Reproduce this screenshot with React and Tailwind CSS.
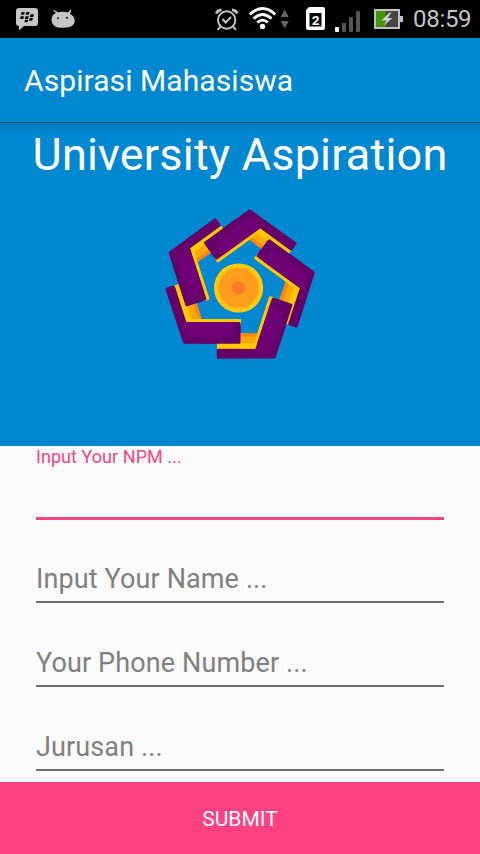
import React from "react";

const ARMS = [
  "rotate(0 238.4 287.1)",
  "translate(0 1.500) rotate(-72 238.4 287.1)",
  "translate(-1.200 -1.400) rotate(-144 238.4 287.1)",
  "rotate(-216 238.4 287.1)",
  "translate(0.800 0) rotate(-288 238.4 287.1)",
];

function Logo() {
  return (
    <svg width="156" height="156" viewBox="162 206 156 156" aria-hidden="true">
      {ARMS.map((t) => (
        <g key={t} transform={t}>
          <path d="M179 286L190.500 282L202.500 321H190Z" fill="#ff8410" />
          <path d="M178 286L187 283L199 321H190Z" fill="#ffa60a" />
          <path d="M173 286L180 283.500L191.500 319H241V324H186Z" fill="#ffc800" />
          <path d="M167 289.200L173.500 287L185.200 323.500H239V342.200H184.500Z" fill="#640068" stroke="#640068" strokeWidth="3" strokeLinejoin="round" />
        </g>
      ))}
      {ARMS.map((t) => (
        <g key={t} transform={t}>
          <path d="M200 319H238.500Q240.500 319 240.500 322V326H200Z" fill="#ffc800" />
          <path d="M200 323.500H239V342.200H200Z" fill="#640068" stroke="#640068" strokeWidth="3" strokeLinejoin="round" />
          <path d="M185.500 322H232V334Q232 337 229 337H188L184 322Z" fill="#700076" />
        </g>
      ))}
      <circle cx="238.600" cy="288" r="24.600" fill="#ffc80a" />
      <circle cx="238.600" cy="288" r="20" fill="#ff9c1c" />
      <circle cx="238.600" cy="288" r="6.800" fill="#ff7b27" />
    </svg>
  );
}

function StatusIcons() {
  return (
    <svg width="404" height="38" viewBox="0 0 404 38" aria-hidden="true">
      <path d="M19 8H35Q38 8 38 11V23Q38 26 35 26H24L19 30.500V26Q16 26 16 23V11Q16 8 19 8Z" fill="#c6c6c6" />
      <g fill="#080808">
        <path d="M21.500 12h3.300l-.7 2.800h-3.300zM26.300 12h3.300l-.7 2.800h-3.300zM20.700 16.200H24l-.7 2.800H20zM25.500 16.200h3.300l-.7 2.800h-3.300zM30.600 14.200h3.300l-.7 2.800h-3.300zM29.700 18h3.300l-.7 2.700H29zM25 19.700h3.300l-.7 2.600h-3.300z" />
      </g>
      <path d="M51.500 21Q51 15 56 13L53 10.500L54 10L58 12.300Q63 11 68 12.600L70.500 9.800L71.200 10.500L70 14Q75 16 74.700 21.500Q74 27 66 27.500Q63 28 60 27.800Q53 27.500 51.500 21Z" fill="#c6c6c6" />
      <circle cx="58" cy="18.300" r="1" fill="#111" />
      <circle cx="67" cy="17.800" r="1" fill="#111" />

      <g fill="none" stroke="#c7c7c7" strokeWidth="1.900">
        <circle cx="226.700" cy="20" r="8.700" />
        <path d="M222.500 19L225.700 22.500L231 17" strokeWidth="2" />
        <path d="M220.500 26.500L217.500 29.800M233 26.500L236 29.800" />
        <path d="M216.200 13.500Q217.500 10 221.500 9.800M232 9.800Q236 10 237.300 13.500" strokeWidth="2.700" />
      </g>
      <g fill="none" stroke="#fff" strokeWidth="2.800">
        <path d="M249.800 14.400Q262.500 2.600 275.200 14.400" />
        <path d="M253.500 18.600Q262.500 10.300 271.500 18.600" />
        <path d="M257.200 22.500Q262.500 17.800 267.800 22.500" />
      </g>
      <circle cx="262.500" cy="26.500" r="2.700" fill="#fff" />
      <path d="M284.700 9.500L288.700 17H280.700ZM280.700 21H288.700L284.700 28.500Z" fill="#646464" />
      <path d="M309 7H323Q325 7 325 9V28Q325 30 323 30H308Q306 30 306 28V10Z" fill="#fff" />
      <rect x="309.500" y="13" width="12" height="13.500" fill="#0a0a0a" />
      <text x="315.500" y="24.500" textAnchor="middle" fill="#fff" fontSize="13.500" fontWeight="700" fontFamily="Roboto, sans-serif">2</text>
      <rect x="335" y="27" width="4" height="5" rx="1" fill="#fff" />
      <g fill="#555">
        <rect x="342" y="23" width="4" height="9" rx="1" />
        <rect x="349" y="17" width="4" height="15" rx="1" />
        <rect x="356" y="11" width="4" height="21" rx="1" />
      </g>
      <rect x="374" y="9" width="26" height="20" fill="#c2c2c2" />
      <rect x="400" y="16" width="3" height="6" fill="#c2c2c2" />
      <rect x="376" y="11" width="22" height="16" fill="#444" />
      <rect x="376" y="11" width="9.500" height="16" fill="#459400" />
      <path d="M389.500 12.500L381.500 20.500H386.500L384 25.500L392.500 18H387.500L391.500 12.500Z" fill="#d2d2d2" />
    </svg>
  );
}

function Field({ label }) {
  return (
    <div className="flex h-[84px] flex-col justify-end">
      <span className="pb-[6px] text-[27px] leading-[32px] tracking-[0.12px] text-[#808080]">{label}</span>
      <div className="mb-px h-[2px] bg-[#6f6f6f]" />
    </div>
  );
}

export default function App() {
  return (
    <div className="flex h-[854px] w-[480px] flex-col overflow-hidden bg-[#fafafa] font-['Roboto',sans-serif]">
      <div className="flex h-[38px] shrink-0 bg-black">
        <StatusIcons />
        <span className="ml-[9px] pt-[5px] text-[24px] leading-[28px] tracking-[-0.3px] text-[#c4c4c4]">08:59</span>
      </div>
      <header className="flex h-[84px] shrink-0 items-center bg-[#0288d1] pt-[2px] pl-6">
        <h1 className="text-[30px] leading-[36px] tracking-[0.08px] whitespace-nowrap text-white">Aspirasi Mahasiswa</h1>
      </header>
      <section className="flex h-[324px] shrink-0 flex-col items-center bg-[#0288d1]">
        <div className="h-px w-full shrink-0 bg-[#07507c]" />
        <div className="-mb-[9px] h-[9px] w-full shrink-0 bg-linear-to-b from-[#0378b8] to-[#0288d1]" />
        <h2 className="relative mt-[4px] h-[56px] text-[45px] leading-[56px] tracking-[0.2px] whitespace-nowrap text-white">University Aspiration</h2>
        <div className="mt-[23px]">
          <Logo />
        </div>
      </section>
      <main className="h-[336px] shrink-0 px-9">
        <div className="flex h-[74px] flex-col justify-between">
          <span className="text-[18px] leading-[22px] tracking-[0.05px] text-[#f04683]">Input Your NPM ...</span>
          <div className="h-[3px] bg-[#f04683]" />
        </div>
        <Field label="Input Your Name ..." />
        <Field label="Your Phone Number ..." />
        <Field label="Jurusan ..." />
      </main>
      <button className="h-[72px] shrink-0 bg-[#ff4081] pt-[2px] text-[21px] leading-[70px] text-white">SUBMIT</button>
    </div>
  );
}
